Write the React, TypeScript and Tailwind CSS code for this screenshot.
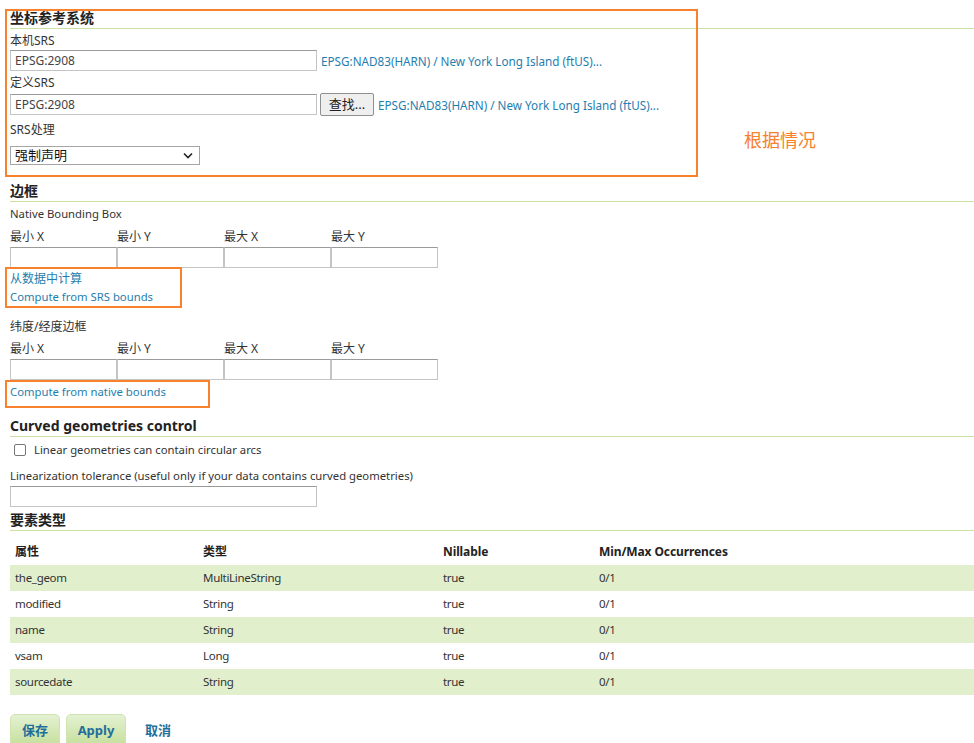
import React from 'react';

const font = { fontFamily: '"Noto Sans", "Noto Sans CJK SC", sans-serif' };

const Heading = ({ children, className = '' }: { children: React.ReactNode; className?: string }) => (
  <div className={`flex items-end border-b border-[#c9e2a3] text-[14px] font-bold leading-[20px] text-[#222] mr-[-10px] ${className}`}>
    {children}
  </div>
);

const Label = ({ children, className = '' }: { children: React.ReactNode; className?: string }) => (
  <div className={`h-[18px] text-[11.3px] leading-[18px] text-[#333] ${className}`}>{children}</div>
);

const TextBox = ({ value = '', className = '' }: { value?: string; className?: string }) => (
  <div
    className={`h-[21px] border border-[#c4c4c4] border-t-[#9a9a9a] bg-white px-[4px] text-[12px] leading-[19px] text-[#444] ${className}`}
  >
    {value}
  </div>
);

const Link = ({ children, className = '' }: { children: React.ReactNode; className?: string }) => (
  <span className={`text-[11.3px] leading-[18px] text-[#1f7eae] ${className}`}>{children}</span>
);

const BoundsRow = () => (
  <>
    <div className="flex h-[19px] text-[12px] leading-[18px] text-[#333]">
      {['最小 X', '最小 Y', '最大 X', '最大 Y'].map((l) => (
        <div key={l} className="w-[107px]">
          {l}
        </div>
      ))}
    </div>
    <div className="flex">
      {[0, 1, 2, 3].map((i) => (
        <TextBox key={i} className="h-[20px] w-[107px]" />
      ))}
    </div>
  </>
);

const rows = [
  ['the_geom', 'MultiLineString'],
  ['modified', 'String'],
  ['name', 'String'],
  ['vsam', 'Long'],
  ['sourcedate', 'String'],
];

export default function App() {
  return (
    <div className="relative min-h-[743px] w-[974px] overflow-hidden bg-white pl-[10px]" style={font}>
      {/* overlays */}
      <div className="pointer-events-none absolute left-[5px] top-[9px] h-[168px] w-[693px] border-2 border-[#f7812c]" />
      <div className="pointer-events-none absolute left-[5px] top-[267px] h-[41px] w-[177px] border-2 border-[#f7812c]" />
      <div className="pointer-events-none absolute left-[5px] top-[380px] h-[28px] w-[205px] border-2 border-[#f7812c]" />
      <div className="absolute left-[744px] top-[128px] text-[18px] leading-[24px] text-[#f7812c]">根据情况</div>

      <Heading className="h-[29px]">坐标参考系统</Heading>
      <Label className="mt-[3px] text-[12px]">本机SRS</Label>
      <div className="flex items-center">
        <TextBox value="EPSG:2908" className="w-[307px]" />
        <Link className="ml-[4px] text-[11.7px]">EPSG:NAD83(HARN) / New York Long Island (ftUS)...</Link>
      </div>
      <Label className="mt-[3px] text-[12px]">定义SRS</Label>
      <div className="mt-[1px] flex items-center">
        <TextBox value="EPSG:2908" className="w-[307px]" />
        <div className="ml-[3px] flex h-[23px] w-[54px] items-center justify-center rounded-[2px] border border-[#8f8f8f] bg-[#efefef] text-[13px] text-[#222]">
          查找...
        </div>
        <Link className="ml-[4px] text-[11.7px]">EPSG:NAD83(HARN) / New York Long Island (ftUS)...</Link>
      </div>
      <Label className="mt-[5px] text-[12px]">SRS处理</Label>
      <div className="mt-[7px] flex h-[19px] w-[190px] items-center justify-between border border-[#a6a6a6] bg-white pl-[4px] pr-[6px] text-[13px] leading-[17px] text-[#111]">
        <span>强制声明</span>
        <svg width="10" height="7" viewBox="0 0 10 7">
          <path d="M1 1.5 L5 5.5 L9 1.5" fill="none" stroke="#222" strokeWidth="1.6" />
        </svg>
      </div>

      <Heading className="mt-[16px] h-[21px]">边框</Heading>
      <Label className="mt-[3px]">Native Bounding Box</Label>
      <div className="mt-[5px]">
        <BoundsRow />
      </div>
      <div className="mt-[2px] flex flex-col">
        <Link className="text-[12px]">从数据中计算</Link>
        <Link>Compute from SRS bounds</Link>
      </div>
      <Label className="mt-[12px] text-[12px]">纬度/经度边框</Label>
      <div className="mt-[4px]">
        <BoundsRow />
      </div>
      <div className="mt-[3px] flex h-[18px] items-center">
        <Link>Compute from native bounds</Link>
      </div>

      <Heading className="mt-[16px] h-[20px]">Curved geometries control</Heading>
      <div className="mt-[4px] flex h-[18px] items-center text-[11.3px] text-[#333]">
        <span className="ml-[4px] mr-[8px] h-[12px] w-[12px] rounded-[2px] border border-[#777] bg-white" />
        Linear geometries can contain circular arcs
      </div>
      <Label className="mt-[8px]">Linearization tolerance (useful only if your data contains curved geometries)</Label>
      <TextBox className="mt-[1px] w-[307px]" />
      <Heading className="mt-[2px] h-[22px]">要素类型</Heading>

      <div className="mt-[8px] mr-[-10px] text-[12px] text-[#333]">
        <div className="flex h-[26px] items-center pl-[5px] font-bold tracking-[-0.1px] text-[#222]">
          <div className="w-[188px]">属性</div>
          <div className="w-[240px]">类型</div>
          <div className="w-[156px]">Nillable</div>
          <div>Min/Max Occurrences</div>
        </div>
        {rows.map(([n, t], i) => (
          <div
            key={n}
            className={`flex h-[26px] items-center pl-[5px] text-[11.5px] tracking-[-0.3px] ${i % 2 === 0 ? 'bg-[#e1efcd]' : 'bg-white'}`}
          >
            <div className="w-[188px]">{n}</div>
            <div className="w-[240px]">{t}</div>
            <div className="w-[156px]">true</div>
            <div>0/1</div>
          </div>
        ))}
      </div>

      <div className="mt-[19px] flex items-center text-[13px] font-bold text-[#1f6f9a]">
        <div className="flex h-[34px] w-[50px] items-center justify-center rounded-t-[5px] border border-[#cfe3b0] bg-gradient-to-b from-[#e4f1d2] to-[#c4de98]">
          保存
        </div>
        <div className="ml-[6px] flex h-[34px] w-[60px] items-center justify-center rounded-t-[5px] border border-[#cfe3b0] bg-gradient-to-b from-[#e4f1d2] to-[#c4de98]">
          Apply
        </div>
        <div className="ml-[19px] font-bold">取消</div>
      </div>
    </div>
  );
}
